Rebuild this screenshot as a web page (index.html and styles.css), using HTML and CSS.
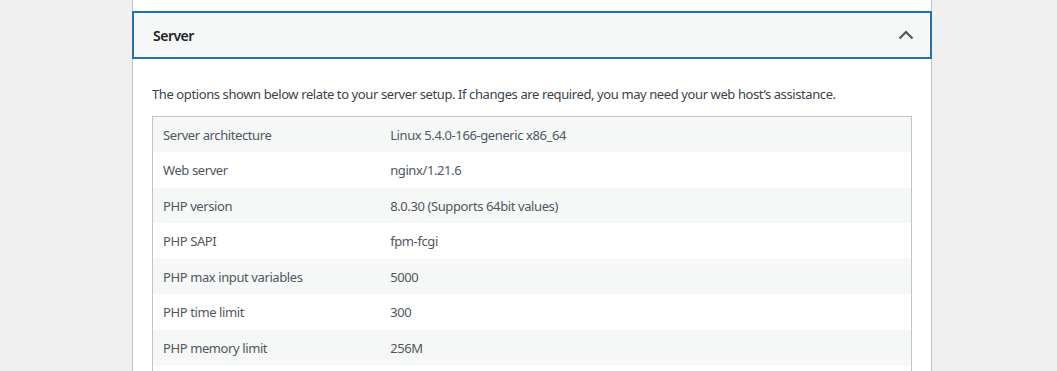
FILE: index.html
```html
<!DOCTYPE html>
<html lang="en">
<head>
    <meta charset="UTF-8">
    <meta name="viewport" content="width=device-width, initial-scale=1.0">
    <title>Site Health - Info</title>
    <link rel="stylesheet" href="styles.css">
</head>
<body>
<div class="wrap">
    <div class="accordion">
        <!-- Server section -->
        <button class="accordion-trigger" aria-expanded="true">
            <span class="title">Server</span>
            <svg class="chevron" width="16" height="10" viewBox="0 0 16 10">
                <path d="M1.5 8.5 L8 2 L14.5 8.5" fill="none" stroke="#50575e" stroke-width="2.2"/>
            </svg>
        </button>
        <div class="accordion-panel">
            <p class="description">The options shown below relate to your server setup. If changes are required, you may need your web host’s assistance.</p>
            <table class="info-table">
                <tbody>
                    <tr><td>Server architecture</td><td>Linux 5.4.0-166-generic x86_64</td></tr>
                    <tr><td>Web server</td><td>nginx/1.21.6</td></tr>
                    <tr><td>PHP version</td><td>8.0.30 (Supports 64bit values)</td></tr>
                    <tr><td>PHP SAPI</td><td>fpm-fcgi</td></tr>
                    <tr><td>PHP max input variables</td><td>5000</td></tr>
                    <tr><td>PHP time limit</td><td>300</td></tr>
                    <tr><td>PHP memory limit</td><td>256M</td></tr>
                    <tr class="spacer"><td></td><td></td></tr>
                </tbody>
            </table>
        </div>
    </div>
</div>
</body>
</html>
```

FILE: styles.css
```css
body {
    font-family: "Noto Sans", "Open Sans", sans-serif;
    font-size: 13px;
    line-height: 1.5;
    color: #3c434a;
    background-color: #f0f0f1;
    margin: 0;
    padding: 0;
    height: 371px;
    overflow: hidden;
}
.wrap {
    margin-left: 132px;
    width: 800px;
}
.accordion {
    background-color: #fff;
    border-left: 1px solid #c3c4c7;
    border-right: 1px solid #c3c4c7;
    padding-top: 11px;
    min-height: 400px;
}
.accordion-trigger {
    display: flex;
    align-items: center;
    justify-content: space-between;
    width: calc(100% + 2px);
    margin: 0 -1px;
    height: 48px;
    padding: 0 16px 0 19px;
    background-color: #f6f7f7;
    border: 2px solid #2271b1;
    font-family: inherit;
    cursor: pointer;
    box-sizing: border-box;
}
.title {
    font-size: 14px;
    font-weight: 600;
    color: #1d2327;
    letter-spacing: -0.5px;
}
.chevron {
    display: block;
}
.accordion-panel {
    padding: 0 19px;
}
.description {
    margin: 26px 0 11px;
    letter-spacing: -0.4px;
}
.info-table {
    width: 100%;
    border: 1px solid #c3c4c7;
    border-bottom: none;
    border-collapse: collapse;
    color: #50575e;
}
.info-table td {
    padding: 9px 10px 7px;
    letter-spacing: -0.4px;
}
.info-table td:first-child {
    width: 30%;
}
.info-table tr:nth-child(odd) {
    background-color: #f6f7f7;
}
.info-table tr.spacer {
    height: 36px;
}
```
